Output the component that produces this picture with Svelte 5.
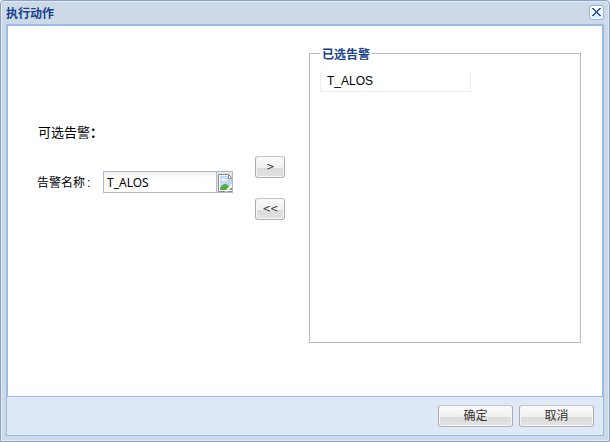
<script>
  const selected = ['T_ALOS'];
  let name = $state('T_ALOS');
</script>

<div class="window">
  <header>
    <span class="title">执行动作</span>
    <button class="close" aria-label="close">
      <svg width="13" height="13" viewBox="0 0 13 13" shape-rendering="crispEdges">
        <path d="M2 2h2v1h-2zM9 2h2v1h-2zM3 3h2v1h-2zM8 3h2v1h-2zM4 4h2v1h-2zM7 4h2v1h-2zM5 5h3v2h-3zM4 7h2v1h-2zM7 7h2v1h-2zM3 8h2v1h-2zM8 8h2v1h-2zM2 9h2v1h-2zM9 9h2v1h-2z" fill="#3450a2" />
      </svg>
    </button>
  </header>
  <main>
    <section class="source">
      <div class="heading">可选告警<b>：</b></div>
      <div class="field">
        <span class="label">告警名称<i>:</i></span>
        <div class="input"><span>{name}</span></div>
        <div class="trigger">
          <svg width="15" height="18" viewBox="0 0 15 18">
            <path d="M.5 .5H10.5L14.5 4.5V17.5H.5Z" fill="#fff" stroke="#8b8b8b" />
            <path d="M2 2H10V5H14V16H2Z" fill="#c3d7f6" />
            <path d="M3 6.5Q3 5 4.5 5Q6 3.5 7.5 5Q9 5 9 6.5Z" fill="#fff" />
            <path d="M2 16V14.5Q6 7.5 10 11.5L14 14.5V16Z" fill="#55ad3a" />
            <path d="M6.5 17.5 14.5 9V12L10 17.5Z" fill="#fff" />
            <path d="M10.5 .5V4.5H14.5Z" fill="#fff" stroke="#777" stroke-width=".8" />
          </svg>
        </div>
      </div>
    </section>
    <div class="moves">
      <button class="btn small">&gt;</button>
      <button class="btn small">&lt;&lt;</button>
    </div>
    <section class="chosen">
      <h2>已选告警</h2>
      {#each selected as item}
        <div class="item">{item}</div>
      {/each}
    </section>
  </main>
  <footer>
    <button class="btn">确定</button>
    <button class="btn">取消</button>
  </footer>
</div>

<style>
  :global(body) {
    margin: 0;
    background: #fff;
  }
  .window, .window * {
    box-sizing: border-box;
  }
  .window {
    width: 610px;
    height: 442px;
    padding: 0 5px 5px 4px;
    display: flex;
    flex-direction: column;
    background: #ced9e7;
    border: 1px solid #8ba1c7;
    border-radius: 4px 4px 0 0;
    box-shadow: inset 0 0 0 1px #e3eaf4;
    font: 12px/16px "Liberation Sans", "Noto Sans CJK SC", sans-serif;
    color: #000;
  }
  button {
    font: inherit;
    padding: 0;
  }
  header {
    height: 23px;
    flex: none;
    display: flex;
    justify-content: space-between;
    padding: 4px 0 0 1px;
  }
  .title {
    padding-top: 1px;
    color: #15428b;
    font-weight: bold;
  }
  .close {
    width: 15px;
    height: 15px;
    display: flex;
    align-items: center;
    justify-content: center;
    border: 1px solid #8fb6e3;
    border-radius: 3px;
    background: linear-gradient(#fff, #d4e8fb);
    box-shadow: inset 0 0 0 1px #fff;
  }
  .close svg {
    flex: none;
  }
  main {
    height: 372px;
    margin: 0 0 0 1px;
    flex: none;
    display: flex;
    background: #fff;
    border: 2px solid #99bbe8;
    border-bottom: 0;
  }
  .source {
    width: 247px;
    padding: 99px 0 0 30px;
  }
  .heading {
    font-size: 13px;
  }
  .field {
    display: flex;
    margin-top: 30px;
    height: 22px;
  }
  .label {
    width: 66px;
    margin-left: -1px;
    padding-top: 4px;
    white-space: nowrap;
  }
  .label i {
    margin-left: 2px;
    font-style: normal;
  }
  .input {
    width: 113px;
    height: 22px;
    padding: 3px 0 0 3px;
    border: 1px solid #b5b8c8;
    border-right: 0;
    background: linear-gradient(#eef1f2, #fff 6px);
    font-family: "Noto Sans", sans-serif;
  }
  .trigger {
    width: 17px;
    height: 22px;
    padding: 2px 0 0 1px;
    border: 1px solid #b5b8c8;
    background: #e6e6e6;
    overflow: hidden;
  }
  .trigger svg {
    display: block;
  }
  .moves {
    display: flex;
    flex-direction: column;
    gap: 20px;
    padding-top: 130px;
    width: 54px;
  }
  .btn {
    width: 75px;
    height: 22px;
    border: 1px solid #b0b0b0;
    border-color: #c6c6c6 #ababab #b0b0b0;
    border-radius: 3px;
    background: linear-gradient(#fbfbfb, #efefef 55%, #dcdcdc 56%, #e2e2e2);
    box-shadow: inset 0 0 0 1px #f6f6f6;
    color: #333;
    line-height: 20px;
  }
  .small {
    width: 30px;
    font: 10px/18px "DejaVu Sans", sans-serif;
    letter-spacing: -1px;
  }
  .chosen {
    width: 272px;
    height: 290px;
    margin-top: 27px;
    padding-left: 10px;
    border: 1px solid #b5b8c8;
  }
  h2 {
    width: 52px;
    height: 16px;
    margin: -8px 0 9px 0;
    padding-left: 2px;
    background: #fff;
    color: #15428b;
    font: bold 12px/19px "Liberation Sans", "Noto Sans CJK SC", sans-serif;
    white-space: nowrap;
  }
  .item {
    width: 151px;
    height: 21px;
    padding: 2px 6px;
    border: 1px solid #ededed;
    border-top: 0;
  }
  footer {
    height: 40px;
    margin-left: 1px;
    display: flex;
    gap: 6px;
    justify-content: flex-end;
    padding: 8px 9px 0;
    background: #dfe8f6;
    border: 1px solid #99bbe8;
  }
</style>
